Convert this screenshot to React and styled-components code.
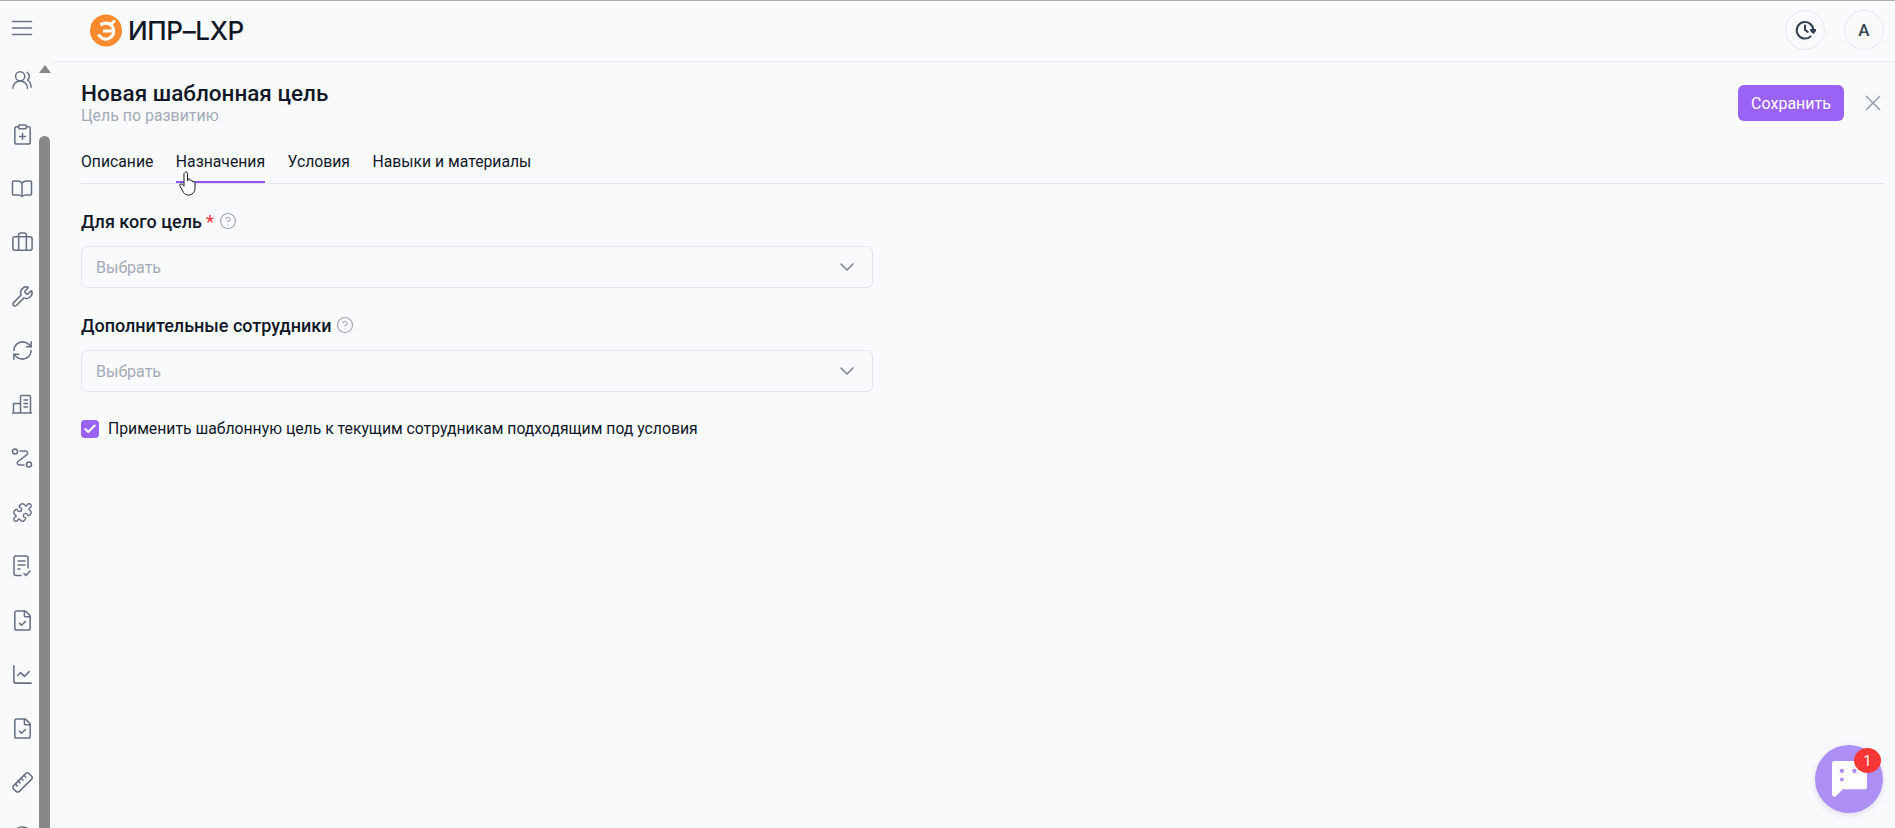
import React from "react";
import styled, { createGlobalStyle } from "styled-components";
import {
  UsersRound,
  ClipboardPlus,
  Briefcase,
  Wrench,
  RefreshCw,
  Puzzle,
  FileCheck,
  ChartLine,
  Ruler,
  CircleHelp,
  ChevronDown,
  X,
  Check,
} from "lucide-react";

const GlobalStyle = createGlobalStyle`
  html, body {
    margin: 0;
    height: 100%;
    overflow: hidden;
    background: #f9fafc;
  }
  body {
    font-family: Roboto, "Noto Sans", sans-serif;
    color: #111827;
  }
  * { box-sizing: border-box; }
`;

const Page = styled.div`
  display: flex;
  height: 828px;
  border-top: 1px solid #adadad;
  overflow: hidden;
`;

const Sidebar = styled.aside`
  display: flex;
  width: 54px;
  flex-shrink: 0;
  height: 827px;
  overflow: hidden;
`;

const IconColumn = styled.nav`
  display: flex;
  flex-direction: column;
  align-items: center;
  width: 39px;
  padding: 15px 0 0 5px;
  gap: 30px;
  color: #667085;
`;

const NavIcon = styled.span`
  display: flex;
  width: 24px;
  height: 24px;
  align-items: center;
  justify-content: center;
  flex-shrink: 0;

  &:first-child {
    margin-bottom: -2px;
  }
`;

const Scrollbar = styled.div`
  display: flex;
  flex-direction: column;
  align-items: center;
  width: 11px;
`;

const ScrollArrow = styled.div`
  width: 0;
  height: 0;
  margin-top: 64px;
  border-left: 6.5px solid transparent;
  border-right: 6.5px solid transparent;
  border-bottom: 8px solid #888;
`;

const ScrollThumb = styled.div`
  width: 11px;
  flex: 1;
  margin-top: 63px;
  border-radius: 6px 6px 0 0;
  background: #888;
`;

const Main = styled.div`
  flex: 1;
  display: flex;
  flex-direction: column;
  min-width: 0;
`;

const Header = styled.header`
  display: flex;
  align-items: center;
  justify-content: space-between;
  height: 61px;
  padding: 0 11px 2px 36px;
  border-bottom: 1px solid #e7e8ec;
`;

const Brand = styled.div`
  display: flex;
  align-items: center;
  gap: 6px;
`;

const BrandName = styled.span`
  font-family: Inter, Roboto, sans-serif;
  font-size: 26px;
  font-weight: 500;
  letter-spacing: -0.35px;
  color: #101828;
`;

const HeaderActions = styled.div`
  display: flex;
  gap: 19px;
`;

const RoundButton = styled.button`
  display: flex;
  align-items: center;
  justify-content: center;
  width: 40px;
  height: 40px;
  padding: 0;
  border: 1px solid #e7e8ec;
  border-radius: 50%;
  background: transparent;
  color: #344054;
  font-family: Roboto, sans-serif;
  font-size: 17px;
  font-weight: 500;
`;

const Content = styled.main`
  padding: 18px 10px 0 27px;
`;

const TitleRow = styled.div`
  display: flex;
  justify-content: space-between;
  align-items: flex-start;
`;

const Title = styled.h1`
  margin: 0;
  font-size: 22.5px;
  line-height: 26px;
  font-weight: 500;
  color: #101828;
`;

const Subtitle = styled.div`
  font-size: 15.9px;
  line-height: 18px;
  margin-top: 1px;
  color: #a3abb9;
`;

const TitleActions = styled.div`
  display: flex;
  align-items: center;
  gap: 16px;
  margin: 5px -1px 0 0;
  color: #98a2b3;
`;

const SaveButton = styled.button`
  width: 106px;
  height: 36px;
  padding: 0;
  border: none;
  border-radius: 6px;
  background: #9b62f6;
  color: #fff;
  font-family: Roboto, sans-serif;
  font-size: 16px;
  font-weight: 400;
`;

const Tabs = styled.div`
  display: flex;
  gap: 22.5px;
  height: 34px;
  margin-top: 25px;
  border-bottom: 1px solid #e4e6eb;
`;

const Tab = styled.div`
  height: 33px;
  padding-top: 1px;
  font-size: 15.75px;
  line-height: 22px;
  color: #101828;
  border-bottom: 2px solid ${(p) => (p.$active ? "#9353ec" : "transparent")};
`;

const Field = styled.div`
  width: 792px;
  margin-top: 27px;
`;

const Label = styled.label`
  display: flex;
  align-items: center;
  height: 20px;
  gap: 5px;
  font-size: 18px;
  font-weight: 500;
  color: #101828;
`;

const Required = styled.span`
  color: #f5333f;
  margin-left: -1px;
`;

const HelpIcon = styled.span`
  display: flex;
  color: #a0a8b6;
`;

const SelectBox = styled.div`
  display: flex;
  align-items: center;
  justify-content: space-between;
  height: 42px;
  margin-top: 15px;
  padding: 0 13px 0 14px;
  border: 1px solid #e4e6eb;
  border-radius: 6px;
  font-size: 16px;
  color: #a3abb9;
`;

const CheckRow = styled.div`
  display: flex;
  align-items: center;
  gap: 9px;
  margin-top: 27px;
  font-size: 15.75px;
  color: #101828;
`;

const CheckMark = styled.span`
  display: flex;
  align-items: center;
  justify-content: center;
  width: 18px;
  height: 18px;
  border-radius: 4px;
  background: #9b62f6;
  color: #fff;
`;

const HandCursor = styled.svg`
  position: absolute;
  left: 179px;
  top: 171px;
`;

const ChatBubble = styled.button`
  position: absolute;
  right: 12px;
  bottom: 15px;
  display: flex;
  align-items: center;
  justify-content: center;
  width: 68px;
  height: 68px;
  padding: 0;
  border: none;
  border-radius: 50%;
  background: #ac8ef5;
  box-shadow: 0 2px 6px rgba(110, 90, 180, 0.2);
`;

const ChatBadge = styled.span`
  position: absolute;
  top: 3px;
  right: 2px;
  display: flex;
  align-items: center;
  justify-content: center;
  width: 27px;
  height: 25px;
  border-radius: 50%;
  background: #f93636;
  color: #fff;
  font-family: Roboto, sans-serif;
  font-size: 14px;
`;

const MirroredRuler = styled(Ruler)`
  transform: scaleX(-1);
`;

const lineIcon = {
  width: 24,
  height: 24,
  viewBox: "0 0 24 24",
  fill: "none",
  stroke: "currentColor",
  strokeWidth: 1.5,
  strokeLinecap: "round",
  strokeLinejoin: "round",
};

const HamburgerIcon = () => (
  <svg {...lineIcon}>
    <path d="M2.500 5.500h19M2.500 12h19M2.500 18.500h19" />
  </svg>
);

const BookIcon = () => (
  <svg {...lineIcon}>
    <path d="M12 7c-1-1.500-3-2-5-2H3.500a1 1 0 0 0-1 1v12a1 1 0 0 0 1 1H8c2 0 3 .5 4 1.500 1-1 2-1.500 4-1.500h4.500a1 1 0 0 0 1-1V6a1 1 0 0 0-1-1H17c-2 0-4 .5-5 2z" />
    <path d="M12 7v13" />
  </svg>
);

const BuildingIcon = () => (
  <svg {...lineIcon}>
    <path d="M2.500 21h19M3.500 21v-9.500h7V21M10.500 21V4.500a1 1 0 0 1 1-1h8a1 1 0 0 1 1 1V21" />
    <path d="M14 8h3.500M14 11.500h3.500M14 15h3.500" />
  </svg>
);

const RouteIcon = () => (
  <svg {...lineIcon}>
    <circle cx="5" cy="5.500" r="2.500" />
    <circle cx="19" cy="18.500" r="2.500" />
    <path d="M10 5h5.500c2 0 2.800 2.300 1.500 3.700L8 15.500c-1.500 1.300-.7 3.500 1.300 3.500H14" />
  </svg>
);

const ListCheckIcon = () => (
  <svg {...lineIcon}>
    <path d="M11 21.500H6a2 2 0 0 1-2-2V4a2 2 0 0 1 2-2h10a2 2 0 0 1 2 2v10" />
    <path d="M8 7h7M8 11h7M8 15h2M14 19.500l2 2 4-4.500" />
  </svg>
);

const navIcons = [
  [HamburgerIcon, 24],
  [UsersRound, 22],
  [ClipboardPlus, 23],
  [BookIcon, 24],
  [Briefcase, 23],
  [Wrench, 23],
  [RefreshCw, 23],
  [BuildingIcon, 24],
  [RouteIcon, 24],
  [Puzzle, 21],
  [ListCheckIcon, 24],
  [FileCheck, 23],
  [ChartLine, 23],
  [FileCheck, 23],
  [MirroredRuler, 23],
  [CircleHelp, 23],
];

const Logo = () => (
  <svg width="32" height="33" viewBox="0 0 32 32">
    <circle cx="16" cy="16" r="16" fill="#fb8a2e" />
    <path d="M10.500 10.500a8 8 0 1 1-2 9.500" fill="none" stroke="#fff" strokeWidth="3.200" />
    <path d="M13 16.500h9" stroke="#fff" strokeWidth="3" />
    <path d="M20 10.500l5-4.500" stroke="#fff" strokeWidth="3" />
  </svg>
);

const HistoryIcon = () => (
  <svg width="22" height="22" viewBox="0 0 24 24" fill="none" stroke="currentColor" strokeWidth="2.200" strokeLinecap="round" strokeLinejoin="round">
    <path d="M21 12a9 9 0 1 0-3 7" />
    <path d="M12 7v5l3 2" />
    <path d="M18.500 12h5l-2.500 3z" fill="currentColor" />
  </svg>
);

const ChatIcon = () => (
  <svg width="35" height="36" viewBox="4 1 32 33">
    <path d="M4 3a2 2 0 0 1 2-2h28a2 2 0 0 1 2 2v22a2 2 0 0 1-2 2H14l-7 6.500a2 2 0 0 1-3-1.500z" fill="#fff" />
    <circle cx="13" cy="10" r="2" fill="#ac8ef5" />
    <circle cx="24.500" cy="10" r="2" fill="#ac8ef5" />
    <circle cx="13" cy="18" r="1.800" fill="#ac8ef5" />
  </svg>
);

const App = () => (
  <>
    <GlobalStyle />
    <Page>
      <Sidebar>
        <IconColumn>
          {navIcons.map(([Icon, size], i) => (
            <NavIcon key={i}>
              <Icon size={size} strokeWidth={1.6} />
            </NavIcon>
          ))}
        </IconColumn>
        <Scrollbar>
          <ScrollArrow />
          <ScrollThumb />
        </Scrollbar>
      </Sidebar>
      <Main>
        <Header>
          <Brand>
            <Logo />
            <BrandName>ИПР–LXP</BrandName>
          </Brand>
          <HeaderActions>
            <RoundButton><HistoryIcon /></RoundButton>
            <RoundButton>A</RoundButton>
          </HeaderActions>
        </Header>
        <Content>
          <TitleRow>
            <div>
              <Title>Новая шаблонная цель</Title>
              <Subtitle>Цель по развитию</Subtitle>
            </div>
            <TitleActions>
              <SaveButton>Сохранить</SaveButton>
              <X size={26} strokeWidth={1.6} />
            </TitleActions>
          </TitleRow>
          <Tabs>
            <Tab>Описание</Tab>
            <Tab $active>Назначения</Tab>
            <Tab>Условия</Tab>
            <Tab>Навыки и материалы</Tab>
          </Tabs>
          <Field>
            <Label>
              Для кого цель <Required>*</Required>
              <HelpIcon><CircleHelp size={18} strokeWidth={1.6} /></HelpIcon>
            </Label>
            <SelectBox>
              Выбрать
              <ChevronDown size={24} strokeWidth={1.6} color="#7d8797" />
            </SelectBox>
          </Field>
          <Field>
            <Label>
              Дополнительные сотрудники
              <HelpIcon><CircleHelp size={18} strokeWidth={1.6} /></HelpIcon>
            </Label>
            <SelectBox>
              Выбрать
              <ChevronDown size={24} strokeWidth={1.6} color="#7d8797" />
            </SelectBox>
          </Field>
          <CheckRow>
            <CheckMark><Check size={14} strokeWidth={3.5} /></CheckMark>
            Применить шаблонную цель к текущим сотрудникам подходящим под условия
          </CheckRow>
        </Content>
      </Main>
    </Page>
    <HandCursor width="20" height="25" viewBox="0 0 20 25">
      <path d="M6 1.500c1-1 2.500-.5 2.500 1V10l.5-2c1-.7 2 0 2 .8l.3 1c.7-1 2-.6 2.200.4l.2.8c.8-.8 2.300-.4 2.300 1v5.500c0 3-2 6-5.500 6.500-3 .3-5-1-6-2.500L1 15c-.8-1.500.8-2.800 2-1.800l2 2V2.500z" fill="#fff" stroke="#1c1c1c" strokeWidth="1" strokeLinejoin="round" />
    </HandCursor>
    <ChatBubble>
      <ChatIcon />
      <ChatBadge>1</ChatBadge>
    </ChatBubble>
  </>
);

export default App;
